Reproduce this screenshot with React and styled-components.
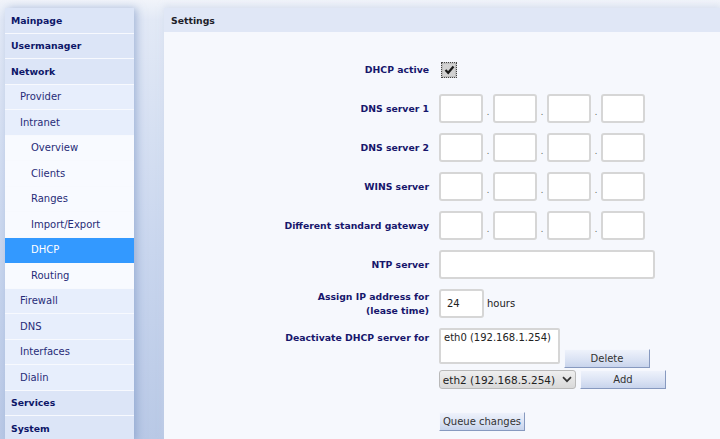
import React, { useState } from 'react';
import styled, { createGlobalStyle } from 'styled-components';

const GlobalStyle = createGlobalStyle`
    html, body {
        margin: 0;
        padding: 0;
    }
    body {
        width: 720px;
        height: 439px;
        overflow: hidden;
        font-family: "DejaVu Sans", Verdana, sans-serif;
        font-size: 10px;
        background: linear-gradient(to bottom, #f1f4fa 0px, #e2e9f6 20px, #c9d6ee 250px, #b9c9e6 439px);
    }
`;

const Page = styled.div`
    display: flex;
    align-items: flex-start;
    padding: 8px 0 0 5px;
    height: 439px;
    box-sizing: border-box;
`;

const Sidebar = styled.nav`
    width: 129px;
    flex-shrink: 0;
    display: flex;
    flex-direction: column;
    box-shadow: 3px 0 8px rgba(120, 145, 195, 0.55);
`;

const levelStyles = {
    1: { bg: '#dce5f7', color: '#0d1668', weight: 'bold', size: 9.3, indent: 6 },
    2: { bg: '#e7eefc', color: '#272c78', weight: 'normal', size: 10, indent: 15 },
    3: { bg: '#f8faff', color: '#272c78', weight: 'normal', size: 10, indent: 26 },
};

const NavItem = styled.div`
    height: 25.5px;
    box-sizing: border-box;
    display: flex;
    align-items: center;
    padding-left: ${p => levelStyles[p.$level].indent}px;
    background: ${p => (p.$active ? '#3399ff' : levelStyles[p.$level].bg)};
    color: ${p => (p.$active ? '#ffffff' : levelStyles[p.$level].color)};
    font-weight: ${p => levelStyles[p.$level].weight};
    font-size: ${p => levelStyles[p.$level].size}px;
    border-bottom: 1px solid ${p => (p.$active ? '#3399ff' : '#f7f9fe')};
    cursor: pointer;
`;

const Panel = styled.main`
    margin-left: 30px;
    flex: 1;
    display: flex;
    flex-direction: column;
    background: #f6f8fd;
    height: 431px;
    box-shadow: 0 -2px 6px rgba(200, 210, 230, 0.5);
`;

const PanelHeader = styled.div`
    height: 24px;
    display: flex;
    align-items: center;
    padding-left: 7px;
    background: #e0e7f6;
    color: #1e1e2a;
    font-weight: bold;
    font-size: 9.3px;
`;

const Form = styled.div`
    display: grid;
    grid-template-columns: 265px 1fr;
    grid-auto-rows: minmax(29px, auto);
    column-gap: 10px;
    row-gap: 10px;
    padding-top: 23px;
`;

const Label = styled.div`
    display: flex;
    align-items: ${p => (p.$top ? 'flex-start' : 'center')};
    justify-content: flex-end;
    text-align: right;
    padding-top: ${p => (p.$top ? '3px' : '0')};
    color: #16166c;
    font-weight: bold;
    font-size: 9.3px;
    line-height: 14px;
`;

const Field = styled.div`
    display: flex;
    align-items: center;
`;

const Check = styled.span`
    width: 14px;
    height: 14px;
    margin: 1px 0 0 2px;
    display: flex;
    align-items: center;
    justify-content: center;
    background: #d2d2d2;
    border: 1px dotted #444;
    box-shadow: inset 0 0 0 1px #bdbdbd;
`;

const TextInput = styled.input`
    width: ${p => p.$w}px;
    height: 29px;
    box-sizing: border-box;
    border: 2px solid #d6d6d6;
    border-radius: 3px;
    background: #ffffff;
    padding: 0 6px;
    font-family: "DejaVu Sans", Verdana, sans-serif;
    font-size: 10px;
    color: #222;
    outline: none;
`;

const Dot = styled.span`
    width: 10px;
    text-align: center;
    font-size: 8px;
    color: #555;
    padding-top: 8px;
`;

const Unit = styled.span`
    margin-left: 3px;
    color: #222;
    font-size: 10px;
`;

const Stack = styled.div`
    display: flex;
    flex-direction: column;
    gap: 2px;
`;

const Line = styled.div`
    display: flex;
    align-items: flex-start;
    gap: 4px;
`;

const ListBox = styled.div`
    width: 121px;
    height: 36px;
    box-sizing: border-box;
    border: 2px solid #d6d6d6;
    border-radius: 2px;
    background: #fff;
    padding: 2px 3px;
    font-size: 10px;
    color: #222;
`;

const Button = styled.button`
    width: ${p => p.$w}px;
    height: 19px;
    box-sizing: border-box;
    padding: 0;
    margin-top: ${p => p.$offset || 0}px;
    font-family: "DejaVu Sans", Verdana, sans-serif;
    font-size: 10px;
    color: #333;
    background: linear-gradient(to bottom, #eef2fb 0%, #dbe3f4 55%, #c8d4ec 100%);
    border: none;
    border-right: 1px solid #8799bf;
    border-bottom: 1px solid #8799bf;
    border-top: 1px solid #f5f7fd;
    border-left: 1px solid #f5f7fd;
    cursor: pointer;
`;

const Select = styled.div`
    width: 137px;
    height: 19px;
    box-sizing: border-box;
    display: flex;
    align-items: center;
    justify-content: center;
    gap: 7px;
    font-size: 10.5px;
    color: #222;
    background: linear-gradient(to bottom, #efefef, #d9d9d9);
    border: 1px solid #b9b9b9;
    border-radius: 3px;
`;

const Spacer = styled.div`
    height: 19px;
`;

const ipRows = ['DNS server 1', 'DNS server 2', 'WINS server', 'Different standard gateway'];

const menu = [
    { label: 'Mainpage', level: 1 },
    { label: 'Usermanager', level: 1 },
    { label: 'Network', level: 1 },
    { label: 'Provider', level: 2 },
    { label: 'Intranet', level: 2 },
    { label: 'Overview', level: 3 },
    { label: 'Clients', level: 3 },
    { label: 'Ranges', level: 3 },
    { label: 'Import/Export', level: 3 },
    { label: 'DHCP', level: 3 },
    { label: 'Routing', level: 3 },
    { label: 'Firewall', level: 2 },
    { label: 'DNS', level: 2 },
    { label: 'Interfaces', level: 2 },
    { label: 'Dialin', level: 2 },
    { label: 'Services', level: 1 },
    { label: 'System', level: 1 },
];

const IpField = () => (
    <Field>
        <TextInput $w={44} />
        <Dot>.</Dot>
        <TextInput $w={44} />
        <Dot>.</Dot>
        <TextInput $w={44} />
        <Dot>.</Dot>
        <TextInput $w={44} />
    </Field>
);

const App = () => {
    const [active, setActive] = useState('DHCP');

    return (
        <>
            <GlobalStyle />
            <Page>
                <Sidebar>
                    {menu.map(item => (
                        <NavItem
                            key={item.label}
                            $level={item.level}
                            $active={active === item.label}
                            onClick={() => setActive(item.label)}
                        >
                            {item.label}
                        </NavItem>
                    ))}
                </Sidebar>

                <Panel>
                    <PanelHeader>Settings</PanelHeader>
                    <Form>
                        <Label>DHCP active</Label>
                        <Field>
                            <Check>
                                <svg width="11" height="10" viewBox="0 0 11 10">
                                    <path d="M1.5 5 L4.2 7.8 L9.5 1.5" fill="none" stroke="#1a1a1a" strokeWidth="2.2" />
                                </svg>
                            </Check>
                        </Field>

                        {ipRows.map(label => (
                            <React.Fragment key={label}>
                                <Label>{label}</Label>
                                <IpField />
                            </React.Fragment>
                        ))}

                        <Label>NTP server</Label>
                        <Field>
                            <TextInput $w={216} />
                        </Field>

                        <Label>Assign IP address for<br />(lease time)</Label>
                        <Field>
                            <TextInput $w={45} defaultValue="24" />
                            <Unit>hours</Unit>
                        </Field>

                        <Label $top>Deactivate DHCP server for</Label>
                        <Stack>
                            <Line>
                                <ListBox>eth0 (192.168.1.254)</ListBox>
                                <Button $w={86} $offset={21}>Delete</Button>
                            </Line>
                            <Line>
                                <Select>
                                    eth2 (192.168.5.254)
                                    <svg width="10" height="7" viewBox="0 0 10 7">
                                        <path d="M1 1.2 L5 5.2 L9 1.2" fill="none" stroke="#333" strokeWidth="1.7" />
                                    </svg>
                                </Select>
                                <Button $w={86}>Add</Button>
                            </Line>
                            <Spacer />
                            <Line>
                                <Button $w={86}>Queue changes</Button>
                            </Line>
                        </Stack>
                    </Form>
                </Panel>
            </Page>
        </>
    );
};

export default App;
